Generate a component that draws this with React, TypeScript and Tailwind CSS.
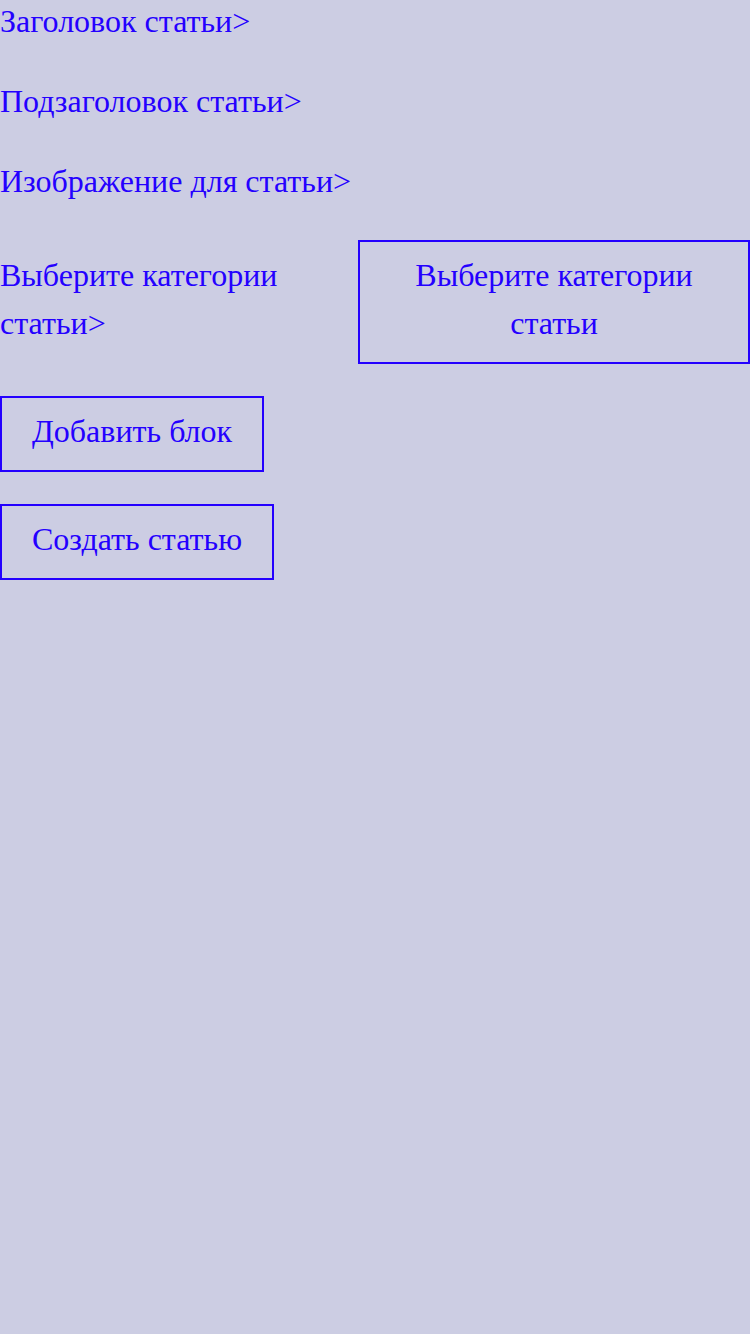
import React from 'react'

const fields = ['Заголовок статьи>', 'Подзаголовок статьи>', 'Изображение для статьи>']

export default function App() {
  return (
    <div className="min-h-screen w-[750px] bg-[#cccde3] font-['Liberation_Serif',serif] text-[32px] leading-[48px] text-[#2400ff]">
      {fields.map((label) => (
        <div key={label} className="mb-[38px] leading-[42px]">
          {label}
        </div>
      ))}

      <div className="mb-8 flex items-center">
        <div className="w-[358px] pb-[6px]">Выберите категории статьи&gt;</div>
        <button className="flex-1 border-2 border-[#2400ff] px-4 pt-[9px] pb-[15px] text-center">
          Выберите категории статьи
        </button>
      </div>

      <div className="flex flex-col items-start gap-8">
        <button className="border-2 border-[#2400ff] px-[30px] pt-[9px] pb-[15px]">Добавить блок</button>
        <button className="border-2 border-[#2400ff] px-[30px] pt-[9px] pb-[15px]">Создать статью</button>
      </div>
    </div>
  )
}
